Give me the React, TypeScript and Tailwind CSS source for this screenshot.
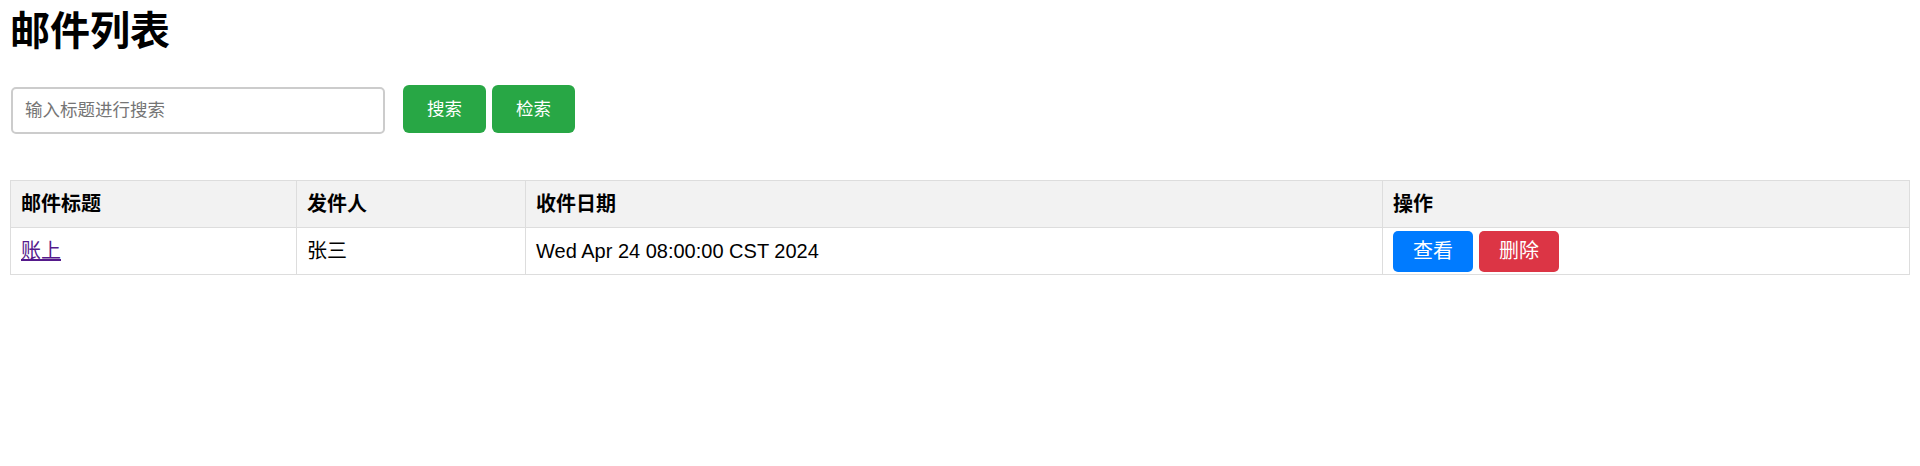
import React from "react";

export default function App() {
  const th = "h-[47px] border border-[#dddddd] px-[10px] py-0 text-left align-middle font-bold";
  const td = "h-[47px] border border-[#dddddd] px-[10px] py-0 align-middle";
  return (
    <div className="min-h-[466px] bg-white px-[10px] text-black font-['Liberation_Sans','Noto_Sans_CJK_SC',sans-serif]">
      <h1 className="pt-[8px] text-[40px] font-bold leading-[46px]">邮件列表</h1>

      <div className="mt-[31px] flex items-start">
        <input
          type="text"
          placeholder="输入标题进行搜索"
          className="ml-[1px] mt-[2px] h-[47px] w-[374px] rounded-[5px] border-2 border-[#cccccc] bg-white px-[12px] text-[17.5px] text-black outline-none placeholder:text-[#757575]"
        />
        <div className="ml-[18px] flex gap-[6px]">
          <button className="flex h-[48px] w-[83px] items-center justify-center rounded-[6px] bg-[#28a745] text-[17.5px] text-white">
            搜索
          </button>
          <button className="flex h-[48px] w-[83px] items-center justify-center rounded-[6px] bg-[#28a745] text-[17.5px] text-white">
            检索
          </button>
        </div>
      </div>

      <table className="mt-[46px] w-[1900px] table-fixed border-collapse text-[20px]">
        <colgroup>
          <col className="w-[286px]" />
          <col className="w-[229px]" />
          <col className="w-[857px]" />
          <col />
        </colgroup>
        <thead>
          <tr className="bg-[#f2f2f2]">
            <th className={th}>邮件标题</th>
            <th className={th}>发件人</th>
            <th className={th}>收件日期</th>
            <th className={th}>操作</th>
          </tr>
        </thead>
        <tbody>
          <tr>
            <td className={td}>
              <a href="#" className="text-[#551a8b] underline">账上</a>
            </td>
            <td className={td}>张三</td>
            <td className={td}>Wed Apr 24 08:00:00 CST 2024</td>
            <td className={td}>
              <div className="flex gap-[6px]">
                <button className="flex h-[41px] w-[80px] items-center justify-center rounded-[5px] bg-[#007bff] text-[20px] text-white">
                  查看
                </button>
                <button className="flex h-[41px] w-[80px] items-center justify-center rounded-[5px] bg-[#dc3545] text-[20px] text-white">
                  删除
                </button>
              </div>
            </td>
          </tr>
        </tbody>
      </table>
    </div>
  );
}
